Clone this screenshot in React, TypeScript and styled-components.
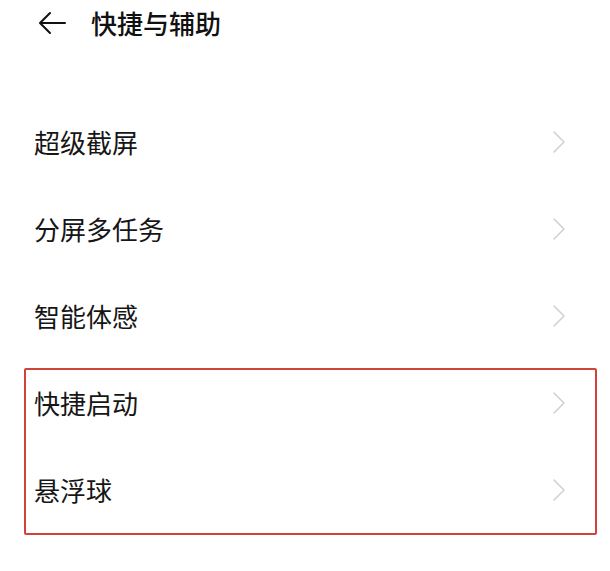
import React from "react";
import styled, { createGlobalStyle } from "styled-components";

const Global = createGlobalStyle`
  html, body { margin: 0; padding: 0; background: #ffffff; }
  body { font-family: "Noto Sans CJK SC", "Noto Sans", sans-serif; color: #1a1a1a; }
`;

const Page = styled.div`
  width: 610px;
  min-height: 571px;
  background: #fff;
`;

const Header = styled.header`
  height: 46px;
  display: flex;
  align-items: center;
  padding-left: 38px;
  gap: 25px;
`;

const BackIcon = styled.svg`
  width: 28px;
  height: 24px;
  display: block;
`;

const Title = styled.h1`
  margin: 0;
  font-size: 26px;
  font-weight: 500;
  line-height: 1;
  color: #111;
`;

const List = styled.div`
  margin-top: 52px;
  display: flex;
  flex-direction: column;
`;

const Row = styled.div`
  height: 87px;
  display: flex;
  align-items: center;
  justify-content: space-between;
  padding: 0 44px 0 34px;
`;

const Label = styled.span`
  font-size: 26px;
  font-weight: 400;
  line-height: 1;
  color: #161616;
`;

const Chevron = styled.svg`
  width: 14px;
  height: 24px;
  display: block;
`;

const Highlight = styled.div`
  position: relative;
  &::after {
    content: "";
    position: absolute;
    top: 9px;
    bottom: -2px;
    left: 24px;
    right: 13px;
    border: 2px solid #d0433b;
    border-radius: 2px;
    pointer-events: none;
  }
`;

const Item = ({ label }: { label: string }) => (
  <Row>
    <Label>{label}</Label>
    <Chevron viewBox="0 0 14 24">
      <path d="M2 2 L12 12 L2 22" fill="none" stroke="#cfcfcf" strokeWidth="1.5" strokeLinecap="round" strokeLinejoin="round" />
    </Chevron>
  </Row>
);

export default function App() {
  return (
    <Page>
      <Global />
      <Header>
        <BackIcon viewBox="0 0 28 24">
          <path d="M27 12 H3 M12 2 L2 12 L12 22" fill="none" stroke="#111" strokeWidth="2" strokeLinecap="round" strokeLinejoin="round" />
        </BackIcon>
        <Title>快捷与辅助</Title>
      </Header>
      <List>
        <Item label="超级截屏" />
        <Item label="分屏多任务" />
        <Item label="智能体感" />
        <Highlight>
          <Item label="快捷启动" />
          <Item label="悬浮球" />
        </Highlight>
      </List>
    </Page>
  );
}
